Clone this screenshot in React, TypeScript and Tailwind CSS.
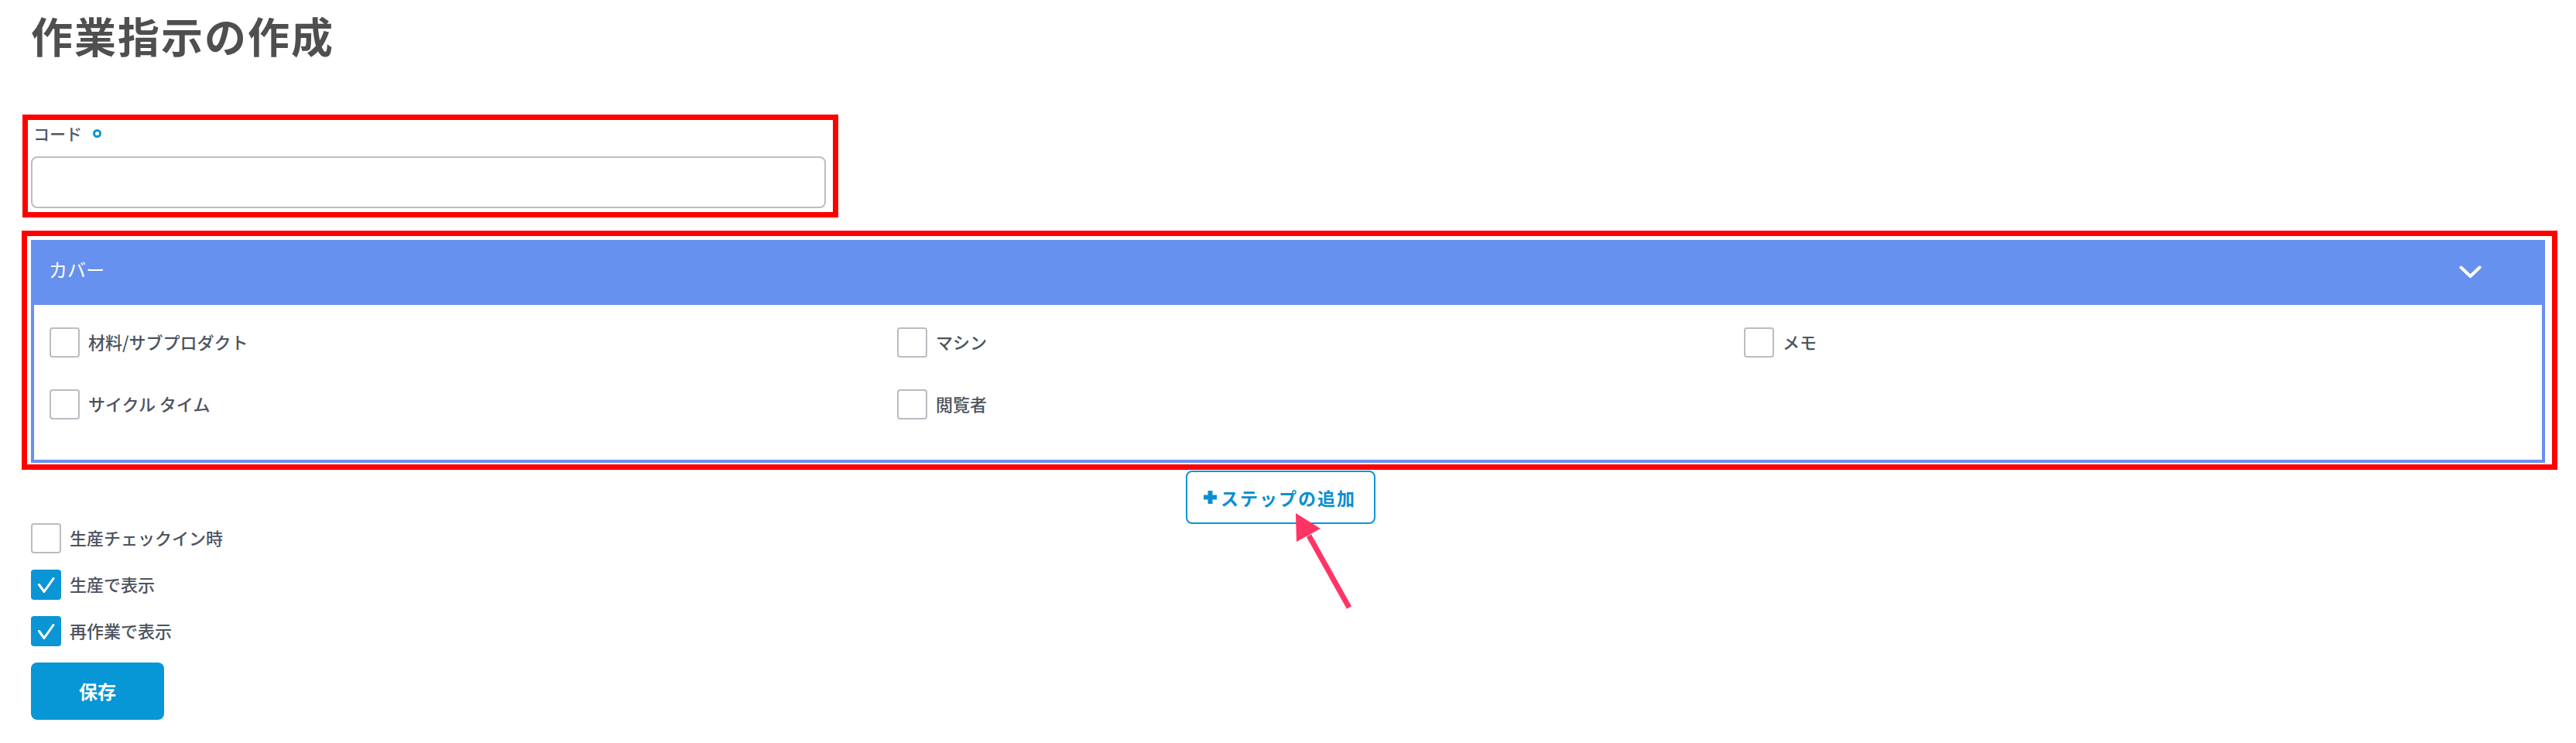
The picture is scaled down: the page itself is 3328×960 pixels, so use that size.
import React from "react";

const FONT = "font-['Noto_Sans_CJK_JP','Noto_Sans',sans-serif]";

function Box({ checked }: { checked?: boolean }) {
  if (checked) {
    return (
      <span className="flex h-[39px] w-[39px] shrink-0 items-center justify-center rounded-[4px] bg-[#0a95d5]">
        <svg width="39" height="39" viewBox="0 0 39 39">
          <path d="M10.5 19.5 L17 28.5 L29 11.5" fill="none" stroke="white" strokeWidth="3" strokeLinecap="round" strokeLinejoin="round" />
        </svg>
      </span>
    );
  }
  return <span className="block h-[39px] w-[39px] shrink-0 rounded-[4px] border-2 border-[#b9bdc2] bg-white" />;
}

function Check({ label, checked }: { label: string; checked?: boolean }) {
  return (
    <div className="flex items-center gap-[11px]">
      <Box checked={checked} />
      <span className="pb-[3px] text-[22px] leading-[24px] font-medium text-[#4c5360]">{label}</span>
    </div>
  );
}

export default function App() {
  return (
    <div className={`relative h-[960px] w-[3328px] overflow-hidden bg-white ${FONT}`}>
      <h1 className="pl-[40px] pt-[14px] text-[54px] leading-[64px] font-bold tracking-[2px] text-[#4f4f4f]">
        作業指示の作成
      </h1>

      {/* コード field with red annotation */}
      <div className="ml-[29px] mt-[70px] h-[133px] w-[1054px] border-[7px] border-[#ff0000] pl-[4px] pr-[9px] pt-[5px]">
        <div className="flex items-center pl-[3px] text-[21px] leading-[24px] font-medium text-[#505865]">
          <span>コード</span>
          <span className="ml-[14px] block h-[11px] w-[11px] rounded-full border-[3px] border-[#0a95d5]" />
        </div>
        <div className="mt-[18px] h-[67px] w-full rounded-[8px] border-2 border-[#babec4] bg-white" />
      </div>

      {/* カバー panel with red annotation */}
      <div className="ml-[28px] mt-[17px] h-[309px] w-[3276px] border-[7px] border-[#ff0000] pl-[5px] pr-[9px] pt-[5px]">
        <div className="flex h-[84px] items-center justify-between bg-[#6791ee] pb-[8px] pl-[23px] pr-[82px]">
          <span className="text-[24px] leading-[24px] text-white">カバー</span>
          <svg width="29" height="17" viewBox="0 0 29 17" className="mt-[6px]">
            <polyline points="2.5,2.5 14.5,14 26.5,2.5" fill="none" stroke="white" strokeWidth="4" strokeLinecap="round" strokeLinejoin="round" />
          </svg>
        </div>
        <div className="grid grid-cols-[1095px_1094px_1fr] gap-y-[41px] border-x-4 border-b-4 border-[#6791ee] pb-[52px] pl-[20px] pt-[29px]">
          <Check label="材料/サブプロダクト" />
          <Check label="マシン" />
          <Check label="メモ" />
          <Check label="サイクル タイム" />
          <Check label="閲覧者" />
        </div>
      </div>

      {/* step add button */}
      <div className="mt-[1px] flex justify-center pr-[19px]">
        <button className="flex h-[69px] w-[245px] items-center justify-center gap-[4px] rounded-[8px] border-2 border-[#0a95d5] bg-white pr-[3px] text-[23px] leading-[24px] font-bold tracking-[2px] text-[#0a8fd0]">
          <svg width="19" height="19" viewBox="0 0 19 19">
            <path d="M9.5 1 V18 M1 9.5 H18" stroke="#0a8fd0" strokeWidth="6" />
          </svg>
          <span>ステップの追加</span>
        </button>
      </div>

      {/* bottom options */}
      <div className="-mt-[1px] flex flex-col gap-[21px] pl-[40px]">
        <Check label="生産チェックイン時" />
        <Check label="生産で表示" checked />
        <Check label="再作業で表示" checked />
      </div>
      <div className="pl-[40px] pt-[21px]">
        <button className="flex h-[74px] w-[172px] items-center justify-center rounded-[8px] bg-[#0796d6] text-[24px] leading-[24px] font-bold text-white">
          保存
        </button>
      </div>

      {/* annotation arrow */}
      <svg className="absolute left-[1660px] top-[650px]" width="100" height="150" viewBox="0 0 100 150">
        <line x1="31" y1="42" x2="83" y2="135" stroke="#ff3465" strokeWidth="7" />
        <polygon points="14,13 15,50 46,33" fill="#ff3465" />
      </svg>
    </div>
  );
}
